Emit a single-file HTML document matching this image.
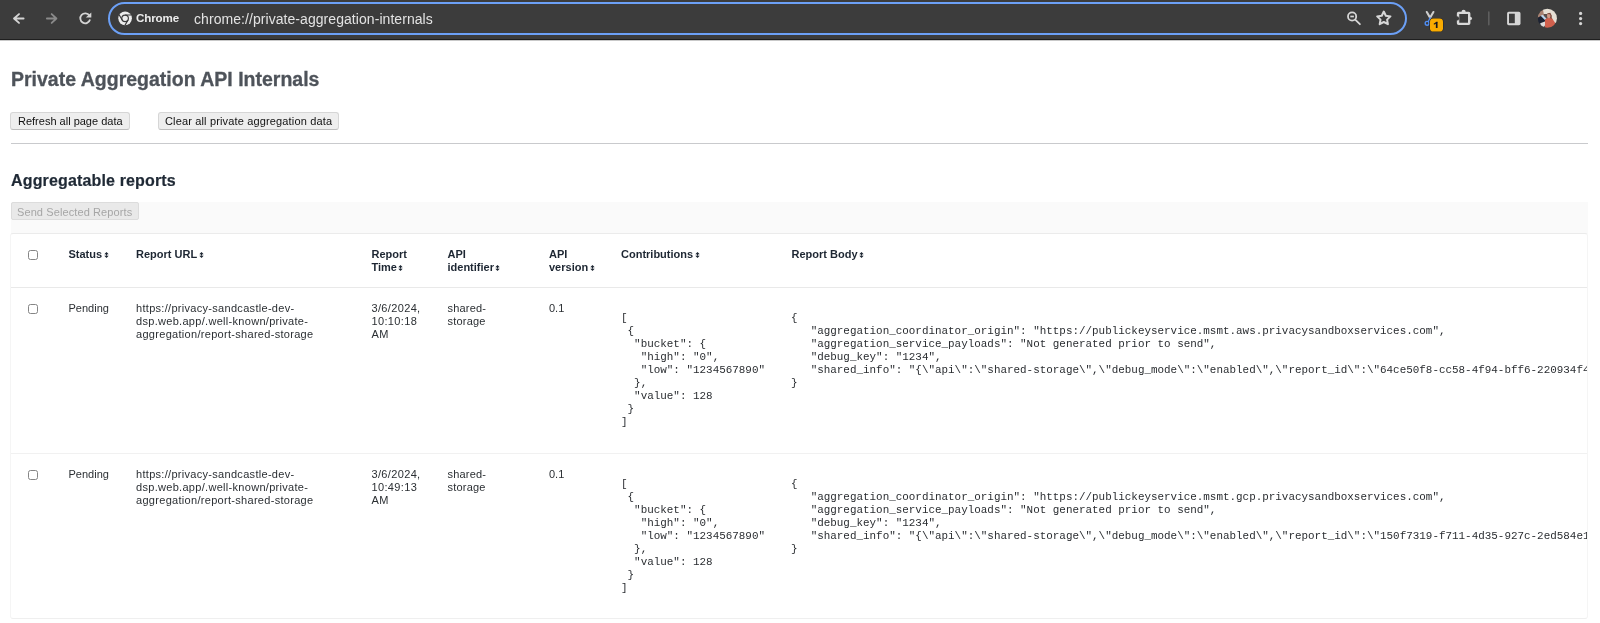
<!DOCTYPE html>
<html>
<head>
<meta charset="utf-8">
<title>Private Aggregation API Internals</title>
<style>
  html, body { margin: 0; padding: 0; }
  body {
    width: 1600px; height: 623px; overflow: hidden; position: relative;
    background: #ffffff;
    font-family: "Liberation Sans", sans-serif;
  }
  #app { position: absolute; left: 0; top: 0; width: 1600px; height: 623px; will-change: transform; }
  .abs { position: absolute; }
  /* browser chrome */
  #toolbar { position: absolute; left: 0; top: 0; width: 1600px; height: 39px; background: #3c3c3c; border-bottom: 1px solid #1f1f1f; }
  #toolbar-shadow { position: absolute; left: 0; top: 40px; width: 1600px; height: 1px; background: #c9c9c9; }
  #omnibox { position: absolute; left: 108px; top: 1.5px; width: 1295px; height: 29px; border: 2.5px solid #6ca0f6; border-radius: 17px; background: #3c3c3c; }
  .tb-text { position: absolute; white-space: pre; color: #e6e6e6; }
  /* page */
  .t { position: absolute; white-space: pre; line-height: 13px; font-size: 11px; color: #2b2f33; }
  h1 { position: absolute; margin: 0; left: 11px; top: 66px; font-size: 19.5px; line-height: 26px; font-weight: bold; color: #4e535a; white-space: pre; -webkit-text-stroke: 0.3px #4e535a; }
  h2 { position: absolute; margin: 0; left: 11px; top: 171px; font-size: 16px; letter-spacing: 0.15px; line-height: 20px; font-weight: bold; color: #1f2935; white-space: pre; -webkit-text-stroke: 0.2px #1f2935; }
  .btn { position: absolute; box-sizing: border-box; height: 18px; border: 1px solid #d6d6d6; border-bottom-color: #bdbdbd; border-radius: 3px; background: #eeeeee; font-family: "Liberation Sans", sans-serif; font-size: 11px; line-height: 16px; color: #111; padding: 0 0 0 6px; white-space: pre; text-align: left; }
  #hr { position: absolute; left: 11px; top: 143px; width: 1577px; height: 1px; background: #c9cacd; }
  #band { position: absolute; left: 11px; top: 202px; width: 1577px; height: 32px; background: #fafafa; }
  #send { left: 11px; top: 202px; width: 128px; padding-top: 1px; padding-left: 5px; border-radius: 2px; letter-spacing: 0.1px; background: #e9e9e9; border-color: #dcdcdc; color: #a6a6a6; }
  #table { position: absolute; left: 10px; top: 233px; width: 1576px; height: 384px; border: 1px solid #f5f5f5; border-top-color: #ebebeb; border-bottom-color: #efefef; border-radius: 3px; overflow: hidden; background: #fff; }
  .hd { font-weight: bold; color: #1d2632; }
  .cb { position: absolute; box-sizing: border-box; width: 10px; height: 10px; border: 1px solid #858585; border-radius: 2.5px; background: #fff; }
  .divider { position: absolute; left: 0; width: 1576px; height: 1px; background: #e9e9e9; }
  pre { margin: 0; position: absolute; font-family: "Liberation Mono", monospace; font-size: 10.91px; line-height: 13px; color: #2a2d31; white-space: pre; }
  .sort { display: inline-block; width: 5px; height: 6px; margin-left: 1.5px; vertical-align: 0; }
</style>
</head>
<body>
<div id="app">
<!-- ===== Browser toolbar ===== -->
<div id="toolbar"></div>
<div id="toolbar-shadow"></div>
<svg class="abs" style="left:0;top:0" width="1600" height="40" viewBox="0 0 1600 40">
  <!-- back -->
  <g fill="none" stroke="#d4d4d4" stroke-width="1.85" stroke-linecap="round" stroke-linejoin="round">
    <path d="M23.6 18.5 H14 M19 14.1 L14 18.5 L19 22.9"/>
  </g>
  <!-- forward -->
  <g fill="none" stroke="#8a8a8a" stroke-width="1.85" stroke-linecap="round" stroke-linejoin="round">
    <path d="M46.9 18.5 H56.4 M51.7 14.1 L56.4 18.5 L51.7 22.9"/>
  </g>
  <!-- reload -->
  <g fill="none" stroke="#d4d4d4" stroke-width="1.8" stroke-linecap="butt">
    <path d="M89.4 15.6 A4.95 4.95 0 1 0 90.05 19.6"/>
  </g>
  <path d="M91.3 12.5 L91.3 17.6 L85.8 17.6 Z" fill="#d4d4d4"/>
</svg>
<div id="omnibox"></div>
<svg class="abs" style="left:0;top:0" width="1600" height="40" viewBox="0 0 1600 40">
  <!-- chrome logo -->
  <circle cx="125.1" cy="18.35" r="6.8" fill="#ececec"/>
  <circle cx="125.1" cy="18.35" r="3.3" fill="none" stroke="#3a3a3a" stroke-width="1.15"/>
  <path d="M125.10 15.00 L131.25 15.00 M128.00 20.03 L124.93 25.35 M122.20 20.03 L119.13 14.70" stroke="#3a3a3a" stroke-width="1.15"/>
  <!-- zoom -->
  <g fill="none" stroke="#d6d6d6" stroke-width="1.8" stroke-linecap="round">
    <circle cx="1352.1" cy="16.5" r="4.1"/>
    <path d="M1355.2 19.6 L1359.9 24.2"/>
  </g>
  <path d="M1350.3 16.5 H1353.9" stroke="#d6d6d6" stroke-width="1.7"/>
  <!-- star -->
  <path d="M1383.80 11.55 L1385.83 15.76 L1390.46 16.39 L1387.08 19.62 L1387.91 24.21 L1383.80 22.00 L1379.69 24.21 L1380.52 19.62 L1377.14 16.39 L1381.77 15.76 Z" fill="none" stroke="#d6d6d6" stroke-width="2" stroke-linejoin="round"/>
  <!-- scissors extension -->
  <g fill="none" stroke="#cdcdcd" stroke-width="2.1" stroke-linecap="round">
    <path d="M1426.8 12 L1430.1 17.8"/>
    <path d="M1433.4 12 L1430.1 17.8"/>
  </g>
  <path d="M1430.1 17.9 L1428.6 21.3" stroke="#4f8ef5" stroke-width="1.5" stroke-linecap="round"/>
  <circle cx="1427.1" cy="23.3" r="1.9" fill="none" stroke="#4f8ef5" stroke-width="1.4"/>
  <rect x="1429.4" y="18.1" width="14.2" height="14" rx="4" fill="#262626"/>
  <rect x="1430" y="18.6" width="13" height="13" rx="3.4" fill="#f9ab00"/>
  <path d="M1436.7 22.1 V28" stroke="#161620" stroke-width="1.7"/>
  <path d="M1436.9 22.2 L1434.3 23.9" stroke="#161620" stroke-width="1.2" stroke-linecap="round"/>
  <!-- puzzle -->
  <rect x="1458.05" y="12.85" width="11.15" height="11.0" rx="0.6" fill="none" stroke="#d8d8d8" stroke-width="2.4"/>
  <circle cx="1463.6" cy="11.9" r="2.1" fill="#d8d8d8"/>
  <circle cx="1470.3" cy="18.4" r="1.7" fill="#d8d8d8"/>
  <circle cx="1456.9" cy="18.4" r="2.2" fill="#3c3c3c"/>
  <!-- separator -->
  <rect x="1488" y="11.2" width="1.6" height="14.4" rx="0.8" fill="#5e5e5e"/>
  <!-- side panel -->
  <rect x="1507.1" y="11.8" width="13.4" height="13.4" rx="1.6" fill="#d6d6d6"/>
  <rect x="1509" y="13.7" width="5.8" height="9.5" fill="#3c3c3c"/>
  <!-- avatar -->
  <defs><clipPath id="av"><circle cx="1547.35" cy="18.25" r="9.6"/></clipPath>
  <filter id="blur" x="-20%" y="-20%" width="140%" height="140%"><feGaussianBlur stdDeviation="0.45"/></filter></defs>
  <g clip-path="url(#av)"><g filter="url(#blur)">
    <rect x="1536" y="7" width="23" height="23" fill="#5a4d48"/>
    <polygon points="1543.03 7.61 1557.47 7.61 1557.47 23.26 1553.86 23.26 1551.85 18.04 1547.04 14.03 1543.03 14.03" fill="#e6dfd4"/>
    <polygon points="1537.41 10.82 1543.03 10.01 1544.23 16.43 1540.22 18.04 1537.41 18.04" fill="#a98272"/>
    <polygon points="1537.41 17.64 1541.42 15.63 1547.04 19.24 1546.64 24.86 1542.22 26.87 1537.41 25.26" fill="#1b2230"/>
    <polygon points="1540.62 15.63 1542.62 14.63 1547.84 20.04 1546.64 21.65" fill="#bcd6ee"/>
    <polygon points="1540.22 23.26 1545.43 21.25 1547.04 23.26 1543.83 26.87 1541.02 26.87" fill="#dcdcdc"/>
    <polygon points="1545.03 19.24 1548.24 17.64 1551.85 18.04 1555.06 22.85 1553.86 30.08 1545.03 30.08" fill="#d0604e"/>
    <ellipse cx="1549.04" cy="15.63" rx="2.1" ry="2.6" fill="#c28c7c"/>
    <polygon points="1547.04 13.62 1550.25 12.82 1551.85 15.63 1551.45 19.24 1550.25 18.04 1547.84 14.43" fill="#7a4a3c"/>
    <ellipse cx="1548.84" cy="16.03" rx="1.6" ry="2.1" fill="#cf9a88"/>
  </g></g>
  <!-- menu -->
  <g fill="#d6d6d6">
    <circle cx="1580.6" cy="13.4" r="1.6"/>
    <circle cx="1580.6" cy="18.6" r="1.6"/>
    <circle cx="1580.6" cy="23.6" r="1.6"/>
  </g>
</svg>
<div class="tb-text" style="left:136px;top:11px;font-size:11.6px;letter-spacing:-0.12px;line-height:14px;font-weight:bold;color:#ececec">Chrome</div>
<div class="tb-text" style="left:194px;top:10.5px;font-size:14px;line-height:17px;letter-spacing:0.06px;color:#e3e3e3">chrome://private-aggregation-internals</div>

<!-- ===== Page ===== -->
<h1>Private Aggregation API Internals</h1>
<button class="btn" style="left:10px;top:112px;width:120px;padding-left:7px">Refresh all page data</button>
<button class="btn" style="left:158px;top:112px;width:181px;letter-spacing:0.15px">Clear all private aggregation data</button>
<div id="hr"></div>
<h2>Aggregatable reports</h2>
<div id="band"></div>
<button class="btn" id="send">Send Selected Reports</button>

<div id="table">
  <!-- header (coords relative to table: left 10+1=11, top 233+1=234) -->
  <div class="cb" style="left:17px;top:16px"></div>
  <div class="t hd" style="left:57.5px;top:14px">Status<svg class="sort" viewBox="0 0 5 6"><path d="M2.5 0 L4.7 2.3 H0.3 Z M2.5 6 L4.7 3.7 H0.3 Z M1.85 2 H3.15 V4 H1.85 Z" fill="#1d2632"/></svg></div>
  <div class="t hd" style="left:125px;top:14px">Report URL<svg class="sort" viewBox="0 0 5 6"><path d="M2.5 0 L4.7 2.3 H0.3 Z M2.5 6 L4.7 3.7 H0.3 Z M1.85 2 H3.15 V4 H1.85 Z" fill="#1d2632"/></svg></div>
  <div class="t hd" style="left:360.5px;top:14px">Report
Time<svg class="sort" viewBox="0 0 5 6"><path d="M2.5 0 L4.7 2.3 H0.3 Z M2.5 6 L4.7 3.7 H0.3 Z M1.85 2 H3.15 V4 H1.85 Z" fill="#1d2632"/></svg></div>
  <div class="t hd" style="left:436.5px;top:14px">API
identifier<svg class="sort" viewBox="0 0 5 6"><path d="M2.5 0 L4.7 2.3 H0.3 Z M2.5 6 L4.7 3.7 H0.3 Z M1.85 2 H3.15 V4 H1.85 Z" fill="#1d2632"/></svg></div>
  <div class="t hd" style="left:538px;top:14px">API
version<svg class="sort" viewBox="0 0 5 6"><path d="M2.5 0 L4.7 2.3 H0.3 Z M2.5 6 L4.7 3.7 H0.3 Z M1.85 2 H3.15 V4 H1.85 Z" fill="#1d2632"/></svg></div>
  <div class="t hd" style="left:610px;top:14px">Contributions<svg class="sort" viewBox="0 0 5 6"><path d="M2.5 0 L4.7 2.3 H0.3 Z M2.5 6 L4.7 3.7 H0.3 Z M1.85 2 H3.15 V4 H1.85 Z" fill="#1d2632"/></svg></div>
  <div class="t hd" style="left:780.5px;top:14px">Report Body<svg class="sort" viewBox="0 0 5 6"><path d="M2.5 0 L4.7 2.3 H0.3 Z M2.5 6 L4.7 3.7 H0.3 Z M1.85 2 H3.15 V4 H1.85 Z" fill="#1d2632"/></svg></div>
  <div class="divider" style="top:53px"></div>

  <!-- row 1 -->
  <div class="cb" style="left:17px;top:70px"></div>
  <div class="t" style="left:57.5px;top:67.5px">Pending</div>
  <div class="t" style="letter-spacing:0.3px;left:125px;top:67.5px">https://privacy-sandcastle-dev-
dsp.web.app/.well-known/private-
aggregation/report-shared-storage</div>
  <div class="t" style="letter-spacing:0.35px;left:360.5px;top:67.5px">3/6/2024,
10:10:18
AM</div>
  <div class="t" style="letter-spacing:0.2px;left:436.5px;top:67.5px">shared-
storage</div>
  <div class="t" style="left:538px;top:67.5px">0.1</div>
<pre style="left:610px;top:78px">[
 {
  "bucket": {
   "high": "0",
   "low": "1234567890"
  },
  "value": 128
 }
]</pre>
<pre style="left:780px;top:78px">{
   "aggregation_coordinator_origin": "https://publickeyservice.msmt.aws.privacysandboxservices.com",
   "aggregation_service_payloads": "Not generated prior to send",
   "debug_key": "1234",
   "shared_info": "{\"api\":\"shared-storage\",\"debug_mode\":\"enabled\",\"report_id\":\"64ce50f8-cc58-4f94-bff6-220934f4a1b2\",\"version\":\"0.1\"}"
}</pre>
  <div class="divider" style="top:219px;background:#f1f1f1"></div>

  <!-- row 2 -->
  <div class="cb" style="left:17px;top:236px"></div>
  <div class="t" style="left:57.5px;top:233.5px">Pending</div>
  <div class="t" style="letter-spacing:0.3px;left:125px;top:233.5px">https://privacy-sandcastle-dev-
dsp.web.app/.well-known/private-
aggregation/report-shared-storage</div>
  <div class="t" style="letter-spacing:0.35px;left:360.5px;top:233.5px">3/6/2024,
10:49:13
AM</div>
  <div class="t" style="letter-spacing:0.2px;left:436.5px;top:233.5px">shared-
storage</div>
  <div class="t" style="left:538px;top:233.5px">0.1</div>
<pre style="left:610px;top:244px">[
 {
  "bucket": {
   "high": "0",
   "low": "1234567890"
  },
  "value": 128
 }
]</pre>
<pre style="left:780px;top:244px">{
   "aggregation_coordinator_origin": "https://publickeyservice.msmt.gcp.privacysandboxservices.com",
   "aggregation_service_payloads": "Not generated prior to send",
   "debug_key": "1234",
   "shared_info": "{\"api\":\"shared-storage\",\"debug_mode\":\"enabled\",\"report_id\":\"150f7319-f711-4d35-927c-2ed584e1c3d4\",\"version\":\"0.1\"}"
}</pre>
</div>
</div>
</body>
</html>
